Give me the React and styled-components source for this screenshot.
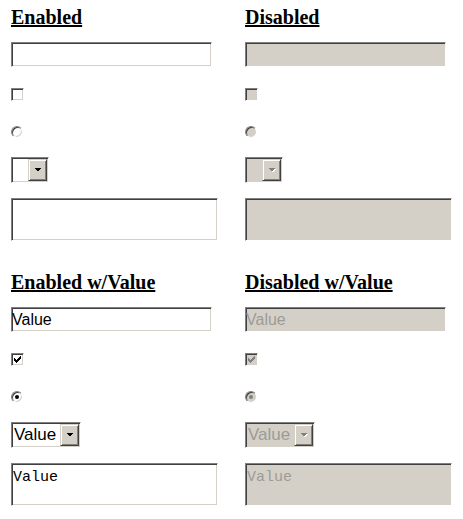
import styled, { createGlobalStyle } from "styled-components";

const FACE = "#d4d0c8";
const GRAY_TEXT = "#9d9b97";

const GlobalStyle = createGlobalStyle`
  html, body {
    margin: 0;
    padding: 0;
    background: #fff;
  }
  body {
    font-family: "Liberation Serif", "Times New Roman", serif;
  }
`;

// classic win2k sunken edge: 1px border + 1px inner shadow
const sunken = `
  border: 1px solid;
  border-color: #808080 #ffffff #ffffff #808080;
  box-shadow: inset 1px 1px 0 #404040, inset -1px -1px 0 #d4d0c8;
`;

const Page = styled.div`
  padding-left: 11px;
`;

const Section = styled.section`
  display: grid;
  grid-template-columns: 234px 218px;
  padding-bottom: 24px;
`;

const Heading = styled.h3`
  margin: 0;
  padding-top: 6px;
  font: bold 20px/23px "Liberation Serif", "Times New Roman", serif;
  text-decoration: underline;
  color: #000;
`;

const TextBox = styled.input`
  display: block;
  box-sizing: border-box;
  margin: 13px 0 0;
  width: 201px;
  height: 25px;
  padding: 0;
  ${sunken}
  background: ${(p) => (p.disabled ? FACE : "#fff")};
  color: ${(p) => (p.disabled ? GRAY_TEXT : "#000")};
  font: 16px "Liberation Sans", Arial, sans-serif;
  outline: none;
`;

const CheckBox = styled.span`
  display: flex;
  align-items: center;
  justify-content: center;
  box-sizing: border-box;
  width: 13px;
  height: 13px;
  margin-top: 21px;
  ${sunken}
  background: ${(p) => (p.$disabled ? FACE : "#fff")};
`;

const Radio = styled.span`
  display: flex;
  align-items: center;
  justify-content: center;
  box-sizing: border-box;
  width: 12px;
  height: 12px;
  margin-top: 25px;
  border-radius: 50%;
  ${sunken}
  background: ${(p) => (p.$disabled ? FACE : "#fff")};
`;

const Dot = styled.span`
  width: 4px;
  height: 4px;
  border-radius: 50%;
  background: ${(p) => (p.$disabled ? "#808080" : "#000")};
`;

const Select = styled.div`
  display: flex;
  box-sizing: border-box;
  width: ${(p) => (p.$wide ? 70 : 38)}px;
  height: 26px;
  margin-top: 19px;
  padding: 1px;
  ${sunken}
  background: ${(p) => (p.$disabled ? FACE : "#fff")};
`;

const SelectText = styled.span`
  flex: 1;
  display: flex;
  align-items: center;
  padding-left: 1px;
  font: 17px "Liberation Sans", Arial, sans-serif;
  color: ${(p) => (p.$disabled ? GRAY_TEXT : "#000")};
  overflow: hidden;
`;

const DropButton = styled.span`
  display: flex;
  align-items: center;
  justify-content: center;
  box-sizing: border-box;
  width: 19px;
  background: ${FACE};
  border: 1px solid;
  border-color: ${FACE} #404040 #404040 ${FACE};
  box-shadow: inset 1px 1px 0 #fff, inset -1px -1px 0 #808080;
`;

const TextArea = styled.textarea`
  display: block;
  box-sizing: border-box;
  margin: 15px 0 0;
  width: 207px;
  height: 43px;
  padding: 5px 0 0 1px;
  ${sunken}
  resize: none;
  overflow: hidden;
  outline: none;
  background: ${(p) => (p.disabled ? FACE : "#fff")};
  color: ${(p) => (p.disabled ? GRAY_TEXT : "#000")};
  font: 15px/17px "Liberation Mono", "Courier New", monospace;
`;

const CHECK_ROWS = [
  [6, 1],
  [5, 2],
  [0, 1, 4, 3],
  [0, 2, 3, 3],
  [0, 5],
  [1, 3],
  [2, 1],
];

function CheckMark({ color }) {
  return (
    <svg width="7" height="7" viewBox="0 0 7 7" shapeRendering="crispEdges">
      {CHECK_ROWS.map((row, y) =>
        row.reduce((acc, v, i) => {
          if (i % 2 === 0) acc.push(<rect key={`${y}-${i}`} x={v} y={y} width={row[i + 1]} height="1" fill={color} />);
          return acc;
        }, [])
      )}
    </svg>
  );
}

function Arrow({ disabled }) {
  return (
    <svg width="8" height="5" viewBox="0 0 8 5" shapeRendering="crispEdges">
      {disabled && <polygon points="1,1 8,1 4.5,4.5" fill="#fff" />}
      <polygon points="0,0 7,0 3.5,3.5" fill={disabled ? "#808080" : "#000"} />
    </svg>
  );
}

function Controls({ disabled, withValue }) {
  return (
    <div>
      <Heading>
        {disabled ? "Disabled" : "Enabled"}
        {withValue && " w/Value"}
      </Heading>
      <TextBox disabled={disabled} readOnly defaultValue={withValue ? "Value" : ""} />
      <CheckBox $disabled={disabled}>
        {withValue && <CheckMark color={disabled ? "#808080" : "#000"} />}
      </CheckBox>
      <Radio $disabled={disabled}>{withValue && <Dot $disabled={disabled} />}</Radio>
      <Select $disabled={disabled} $wide={withValue}>
        <SelectText $disabled={disabled}>{withValue ? "Value" : ""}</SelectText>
        <DropButton>
          <Arrow disabled={disabled} />
        </DropButton>
      </Select>
      <TextArea disabled={disabled} readOnly defaultValue={withValue ? "Value" : ""} />
    </div>
  );
}

export default function App() {
  return (
    <>
      <GlobalStyle />
      <Page>
        <Section>
          <Controls />
          <Controls disabled />
        </Section>
        <Section>
          <Controls withValue />
          <Controls disabled withValue />
        </Section>
      </Page>
    </>
  );
}
